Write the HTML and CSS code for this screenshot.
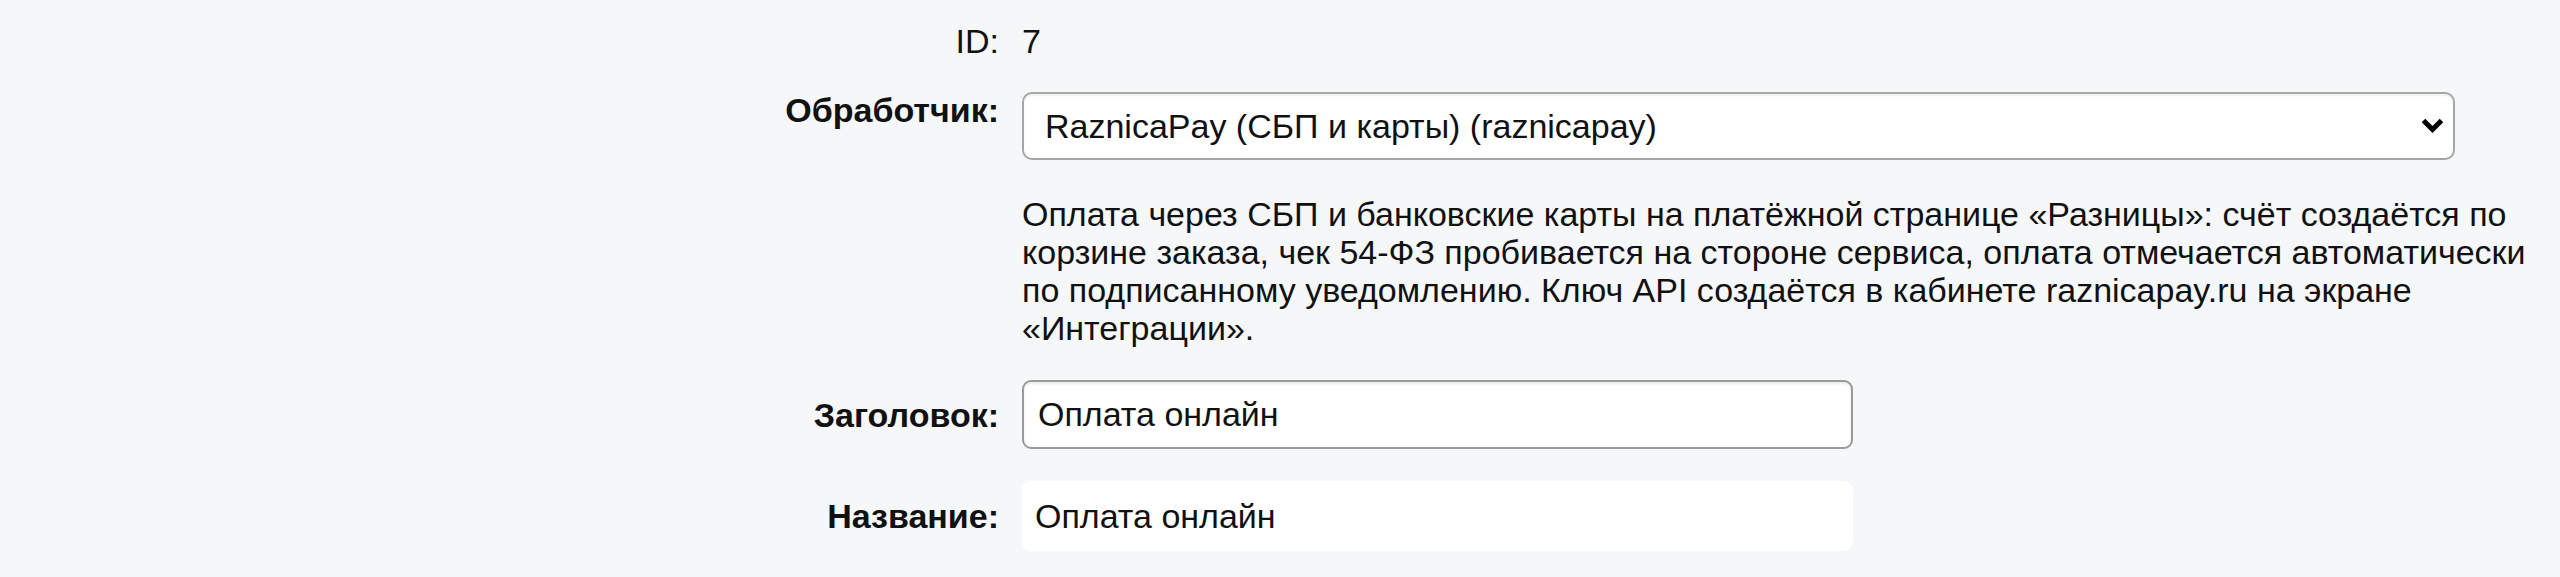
FILE: index.html
```html
<!DOCTYPE html>
<html lang="ru">
<head>
<meta charset="utf-8">
<title>Способ оплаты</title>
<link rel="stylesheet" href="styles.css">
</head>
<body>
<div class="form">
  <div class="label plain">ID:</div>
  <div class="value">7</div>

  <label class="label start" for="handler">Обработчик:</label>
  <div class="select-wrap">
    <select id="handler" class="select">
      <option>RaznicaPay (СБП и карты) (raznicapay)</option>
    </select>
    <svg class="chevron" width="23" height="15" viewBox="0 0 23 15" aria-hidden="true">
      <path d="M2.5 2.5 L11.5 11.5 L20.5 2.5" fill="none" stroke="#000" stroke-width="5" stroke-linecap="butt" stroke-linejoin="miter"/>
    </svg>
  </div>

  <div class="spacer"></div>
  <p class="desc">Оплата через СБП и банковские карты на платёжной странице «Разницы»: счёт создаётся по корзине заказа, чек 54-ФЗ пробивается на стороне сервиса, оплата отмечается автоматически по подписанному уведомлению. Ключ API создаётся в кабинете raznicapay.ru на экране «Интеграции».</p>

  <label class="label center" for="title">Заголовок:</label>
  <input id="title" class="input" type="text" value="Оплата онлайн">

  <div class="label center">Название:</div>
  <div class="static">Оплата онлайн</div>
</div>
</body>
</html>
```
FILE: styles.css
```css
html, body {
  margin: 0;
  padding: 0;
  background: #f5f7f9;
}

body {
  font-family: "Liberation Sans", Arial, sans-serif;
  font-size: 34px;
  line-height: 38px;
  color: #111;
}

.form {
  display: grid;
  grid-template-columns: 999px 1fr;
  column-gap: 23px;
  row-gap: 32px;
  padding: 22px 0 0 0;
}

.label {
  text-align: right;
  font-weight: bold;
  white-space: nowrap;
}

.label.plain {
  font-weight: normal;
}

.label.start {
  align-self: start;
  margin-top: -1px;
}

.label.center {
  align-self: center;
}

.value {
  align-self: start;
}

.select-wrap {
  position: relative;
  width: 1433px;
  height: 68px;
}

.select {
  appearance: none;
  -webkit-appearance: none;
  box-sizing: border-box;
  width: 100%;
  height: 100%;
  margin: 0;
  padding: 0 50px 0 21px;
  font: inherit;
  color: #111;
  background: #fff;
  border: 2px solid #a6a6a6;
  border-radius: 10px;
  box-shadow: inset 0 2px 2px rgba(0, 0, 0, 0.06);
}

.chevron {
  position: absolute;
  right: 11px;
  top: 26px;
  pointer-events: none;
}

.desc {
  margin: 3px 0 1px 0;
  max-width: 1505px;
}

.input {
  box-sizing: border-box;
  width: 831px;
  height: 69px;
  margin: 0;
  padding: 0 14px;
  font: inherit;
  color: #111;
  background: #fff;
  border: 2px solid #9a9a9a;
  border-radius: 9px;
  box-shadow: inset 0 2px 3px rgba(0, 0, 0, 0.08);
  outline: none;
}

.static {
  box-sizing: border-box;
  width: 831px;
  height: 70px;
  padding: 0 13px;
  display: flex;
  align-items: center;
  background: #fff;
  border-radius: 9px;
}
```
